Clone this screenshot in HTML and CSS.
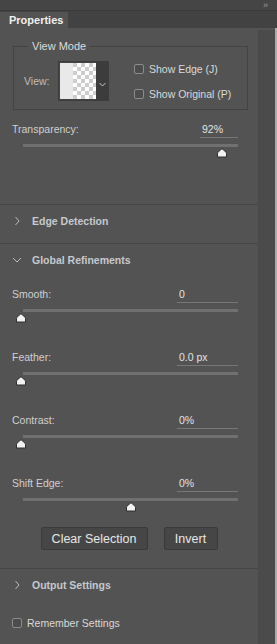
FILE: index.html
```html
<!DOCTYPE html>
<html lang="en">
<head>
    <meta charset="UTF-8">
    <meta name="viewport" content="width=device-width, initial-scale=1.0">
    <title>Properties</title>
    <link rel="stylesheet" href="styles.css">
</head>
<body>
    <div class="topbar">
        <span class="collapse">&rsaquo;&rsaquo;</span>
    </div>

    <div class="tabbar">
        <div class="tab">Properties</div>
    </div>

    <div class="body">
        <div class="panel">
            <fieldset class="view-mode">
                <legend>View Mode</legend>
                <div class="view-row">
                    <span class="view-label">View:</span>
                    <div class="view-picker">
                        <div class="preview">
                            <div class="preview-solid"></div>
                            <div class="preview-checker"></div>
                        </div>
                        <div class="picker-arrow">
                            <svg width="7" height="5" viewBox="0 0 7 5"><polyline points="0.5,1 3.5,4 6.5,1" fill="none" stroke="#c8c8c8" stroke-width="1"/></svg>
                        </div>
                    </div>
                    <div class="view-checks">
                        <label class="check"><span class="box"></span>Show Edge (J)</label>
                        <label class="check"><span class="box"></span>Show Original (P)</label>
                    </div>
                </div>
            </fieldset>

            <div class="field first">
                <div class="field-head">
                    <span class="field-label">Transparency:</span>
                    <span class="field-value short">92%</span>
                </div>
                <div class="slider">
                    <div class="track"></div>
                    <svg class="thumb" style="left: calc(92.5% - 6px)" width="12" height="10" viewBox="0 0 12 10"><path d="M1.5 9 V5.2 Q1.5 4.6 2 4.2 L5.2 1.3 Q6 0.7 6.8 1.3 L10 4.2 Q10.5 4.6 10.5 5.2 V9 Z" fill="#f2f2f2" stroke="#2e2e2e" stroke-width="1" stroke-linejoin="round"/></svg>
                </div>
            </div>

            <div class="section">
                <div class="section-head">
                    <svg class="chev" width="8" height="10" viewBox="0 0 8 10"><polyline points="2.5,1 6,5 2.5,9" fill="none" stroke="#bdbdbd" stroke-width="1"/></svg>
                    <span>Edge Detection</span>
                </div>
                <div class="section-gap"></div>
            </div>

            <div class="section">
                <div class="section-head">
                    <svg class="chev" width="10" height="8" viewBox="0 0 10 8"><polyline points="1,2 5,6 9,2" fill="none" stroke="#bdbdbd" stroke-width="1"/></svg>
                    <span>Global Refinements</span>
                </div>

                <div class="field">
                    <div class="field-head">
                        <span class="field-label">Smooth:</span>
                        <span class="field-value">0</span>
                    </div>
                    <div class="slider">
                        <div class="track"></div>
                        <svg class="thumb" style="left: calc(0% - 8px)" width="12" height="10" viewBox="0 0 12 10"><path d="M1.5 9 V5.2 Q1.5 4.6 2 4.2 L5.2 1.3 Q6 0.7 6.8 1.3 L10 4.2 Q10.5 4.6 10.5 5.2 V9 Z" fill="#f2f2f2" stroke="#2e2e2e" stroke-width="1" stroke-linejoin="round"/></svg>
                    </div>
                </div>

                <div class="field">
                    <div class="field-head">
                        <span class="field-label">Feather:</span>
                        <span class="field-value">0.0 px</span>
                    </div>
                    <div class="slider">
                        <div class="track"></div>
                        <svg class="thumb" style="left: calc(0% - 8px)" width="12" height="10" viewBox="0 0 12 10"><path d="M1.5 9 V5.2 Q1.5 4.6 2 4.2 L5.2 1.3 Q6 0.7 6.8 1.3 L10 4.2 Q10.5 4.6 10.5 5.2 V9 Z" fill="#f2f2f2" stroke="#2e2e2e" stroke-width="1" stroke-linejoin="round"/></svg>
                    </div>
                </div>

                <div class="field">
                    <div class="field-head">
                        <span class="field-label">Contrast:</span>
                        <span class="field-value">0%</span>
                    </div>
                    <div class="slider">
                        <div class="track"></div>
                        <svg class="thumb" style="left: calc(0% - 8px)" width="12" height="10" viewBox="0 0 12 10"><path d="M1.5 9 V5.2 Q1.5 4.6 2 4.2 L5.2 1.3 Q6 0.7 6.8 1.3 L10 4.2 Q10.5 4.6 10.5 5.2 V9 Z" fill="#f2f2f2" stroke="#2e2e2e" stroke-width="1" stroke-linejoin="round"/></svg>
                    </div>
                </div>

                <div class="field">
                    <div class="field-head">
                        <span class="field-label">Shift Edge:</span>
                        <span class="field-value">0%</span>
                    </div>
                    <div class="slider">
                        <div class="track"></div>
                        <svg class="thumb" style="left: calc(50% - 6px)" width="12" height="10" viewBox="0 0 12 10"><path d="M1.5 9 V5.2 Q1.5 4.6 2 4.2 L5.2 1.3 Q6 0.7 6.8 1.3 L10 4.2 Q10.5 4.6 10.5 5.2 V9 Z" fill="#f2f2f2" stroke="#2e2e2e" stroke-width="1" stroke-linejoin="round"/></svg>
                    </div>
                </div>

                <div class="actions">
                    <button class="btn wide">Clear Selection</button>
                    <button class="btn">Invert</button>
                </div>
            </div>

            <div class="section">
                <div class="section-head">
                    <svg class="chev" width="8" height="10" viewBox="0 0 8 10"><polyline points="2.5,1 6,5 2.5,9" fill="none" stroke="#bdbdbd" stroke-width="1"/></svg>
                    <span>Output Settings</span>
                </div>
                <label class="check remember"><span class="box"></span>Remember Settings</label>
            </div>
        </div>
        <div class="scroll"></div>
        <div class="edge"></div>
    </div>
</body>
</html>
```

FILE: styles.css
```css
body {
    margin: 0;
    padding: 0;
    width: 277px;
    height: 644px;
    overflow: hidden;
    background: #535353;
    font-family: 'Liberation Sans', Arial, sans-serif;
    font-size: 10.5px;
    color: #d4d4d4;
}
.topbar {
    height: 10px;
    background: #454545;
    border-bottom: 1px solid #3a3a3a;
    display: flex;
    justify-content: flex-end;
    align-items: center;
}
.collapse {
    font-size: 9px;
    line-height: 10px;
    color: #9a9a9a;
    margin-right: 10px;
    letter-spacing: -1px;
}
.tabbar {
    height: 17px;
    background: #424242;
    display: flex;
    align-items: flex-end;
}
.tab {
    width: 68px;
    height: 16px;
    background: #535353;
    color: #f0f0f0;
    font-weight: bold;
    font-size: 11px;
    line-height: 16px;
    padding-left: 9px;
    box-sizing: border-box;
}
.body {
    display: flex;
    height: 616px;
}
.panel {
    width: 258px;
    flex-shrink: 0;
}
.scroll {
    width: 16px;
    margin-top: 2px;
    background: #4b4b4b;
    border-left: 1px solid #484848;
}
.edge {
    width: 2px;
    background: #aaaaaa;
}
.view-mode {
    margin: 12px 10px 0 13px;
    padding: 8px 0 8px 10px;
    border: 1px solid #434343;
}
.view-mode legend {
    padding: 0 4px;
    margin-left: 4px;
    font-size: 11px;
    line-height: 13px;
    color: #dcdcdc;
}
.view-row {
    display: flex;
    align-items: center;
    height: 40px;
}
.view-label {
    width: 34px;
    color: #bfbfbf;
}
.view-picker {
    display: flex;
    width: 51px;
    height: 40px;
    box-sizing: border-box;
    border: 1px solid #3d3d3d;
    background: #444;
}
.preview {
    display: flex;
    width: 36px;
    margin: 1px 0 1px 1px;
}
.preview-solid {
    width: 13px;
    background: #e9e9e9;
}
.preview-checker {
    flex: 1;
    background: repeating-conic-gradient(#ffffff 0 25%, #cdcdcd 0 50%) 0 0 / 8px 8px;
}
.picker-arrow {
    flex: 1;
    background: #3c3c3c;
    display: flex;
    align-items: center;
    justify-content: center;
    padding-top: 6px;
}
.view-checks {
    display: flex;
    flex-direction: column;
    gap: 12px;
    margin-left: 25px;
}
.check {
    display: flex;
    align-items: center;
    height: 13px;
    color: #dadada;
}
.box {
    width: 10px;
    height: 10px;
    box-sizing: border-box;
    border: 1px solid #8c8c8c;
    border-radius: 2px;
    background: #4c4c4c;
    margin-right: 5px;
}
.field {
    height: 63px;
    padding: 0 20px 0 12px;
    box-sizing: border-box;
}
.field.first {
    height: 82px;
    margin-top: 12px;
}
.field-head {
    display: flex;
    justify-content: space-between;
    height: 17px;
    line-height: 14px;
}
.field-label {
    color: #d0d0d0;
}
.field-value {
    width: 61px;
    height: 16px;
    padding-left: 2px;
    box-sizing: border-box;
    border-bottom: 1px solid #777;
    color: #e2e2e2;
}
.field-value.short {
    width: 38px;
}
.slider {
    position: relative;
    margin: 5px 0 0 11px;
    height: 16px;
}
.track {
    height: 3px;
    background: #707070;
}
.thumb {
    position: absolute;
    top: 4px;
}
.section {
    border-top: 1px solid #464646;
}
.section-head {
    height: 31px;
    display: flex;
    align-items: center;
    padding-left: 12px;
    font-weight: bold;
    font-size: 10.5px;
    color: #c6c9ce;
}
.chev {
    width: 10px;
    margin-right: 10px;
}
.section-gap {
    height: 7px;
}
.section-head + .field {
    margin-top: 12px;
}
.actions {
    display: flex;
    justify-content: center;
    gap: 16px;
    margin-top: -12px;
    padding-bottom: 18px;
}
.btn {
    height: 23px;
    width: 54px;
    padding: 0;
    background: #464646;
    border: 1px solid #3a3a3a;
    border-radius: 2px;
    color: #e6e6e6;
    font-family: 'Liberation Sans', Arial, sans-serif;
    font-size: 12.5px;
}
.btn.wide {
    width: 107px;
}
.remember {
    margin: 16px 0 0 12px;
}
```
